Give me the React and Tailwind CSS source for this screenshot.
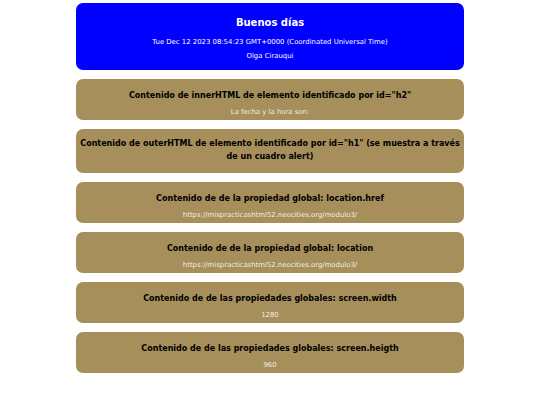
import React from "react";

const cards = [
    { title: 'Contenido de innerHTML de elemento identificado por id="h2"', text: "La fecha y la hora son:" },
    { title: 'Contenido de outerHTML de elemento identificado por id="h1" (se muestra a través de un cuadro alert)', text: "" },
    { title: "Contenido de de la propiedad global: location.href", text: "https://mispracticashtml52.neocities.org/modulo3/" },
    { title: "Contenido de de la propiedad global: location", text: "https://mispracticashtml52.neocities.org/modulo3/" },
    { title: "Contenido de de las propiedades globales: screen.width", text: "1280" },
    { title: "Contenido de de las propiedades globales: screen.heigth", text: "960" },
];

const App = () => {
    return (
        <div className="min-h-[405px] bg-white pt-[3px]" style={{ fontFamily: '"DejaVu Sans", Verdana, sans-serif' }}>
            <div className="w-[388px] mx-auto flex flex-col gap-[9px]">
                {/* Cabecera */}
                <div className="bg-[#0000ff] rounded-[7px] text-white text-center h-[67px] flex flex-col items-center pt-[14px]">
                    <h1 className="font-bold text-[10px] leading-[12px]">Buenos días</h1>
                    <p className="text-[6.9px] leading-[8px] mt-[9px]">Tue Dec 12 2023 08:54:23 GMT+0000 (Coordinated Universal Time)</p>
                    <p className="text-[6.9px] leading-[8px] mt-[6px]">Olga Cirauqui</p>
                </div>

                {/* Tarjetas */}
                {cards.map((card, i) =>
                    card.text ? (
                        <div key={i} className="bg-[#a68f5b] rounded-[7px] text-center h-[41px] pt-[12px] px-[2px]">
                            <h2 className="font-bold text-[8px] leading-[10px] text-black">{card.title}</h2>
                            <p className="text-[6.9px] leading-[8px] text-[#f1ede4] mt-[7px]">{card.text}</p>
                        </div>
                    ) : (
                        <div key={i} className="bg-[#a68f5b] rounded-[7px] text-center h-[44px] pt-[8px] px-[4px]">
                            <h2 className="font-bold text-[8px] leading-[13px] text-black">{card.title}</h2>
                        </div>
                    )
                )}
            </div>
        </div>
    );
};

export default App;
